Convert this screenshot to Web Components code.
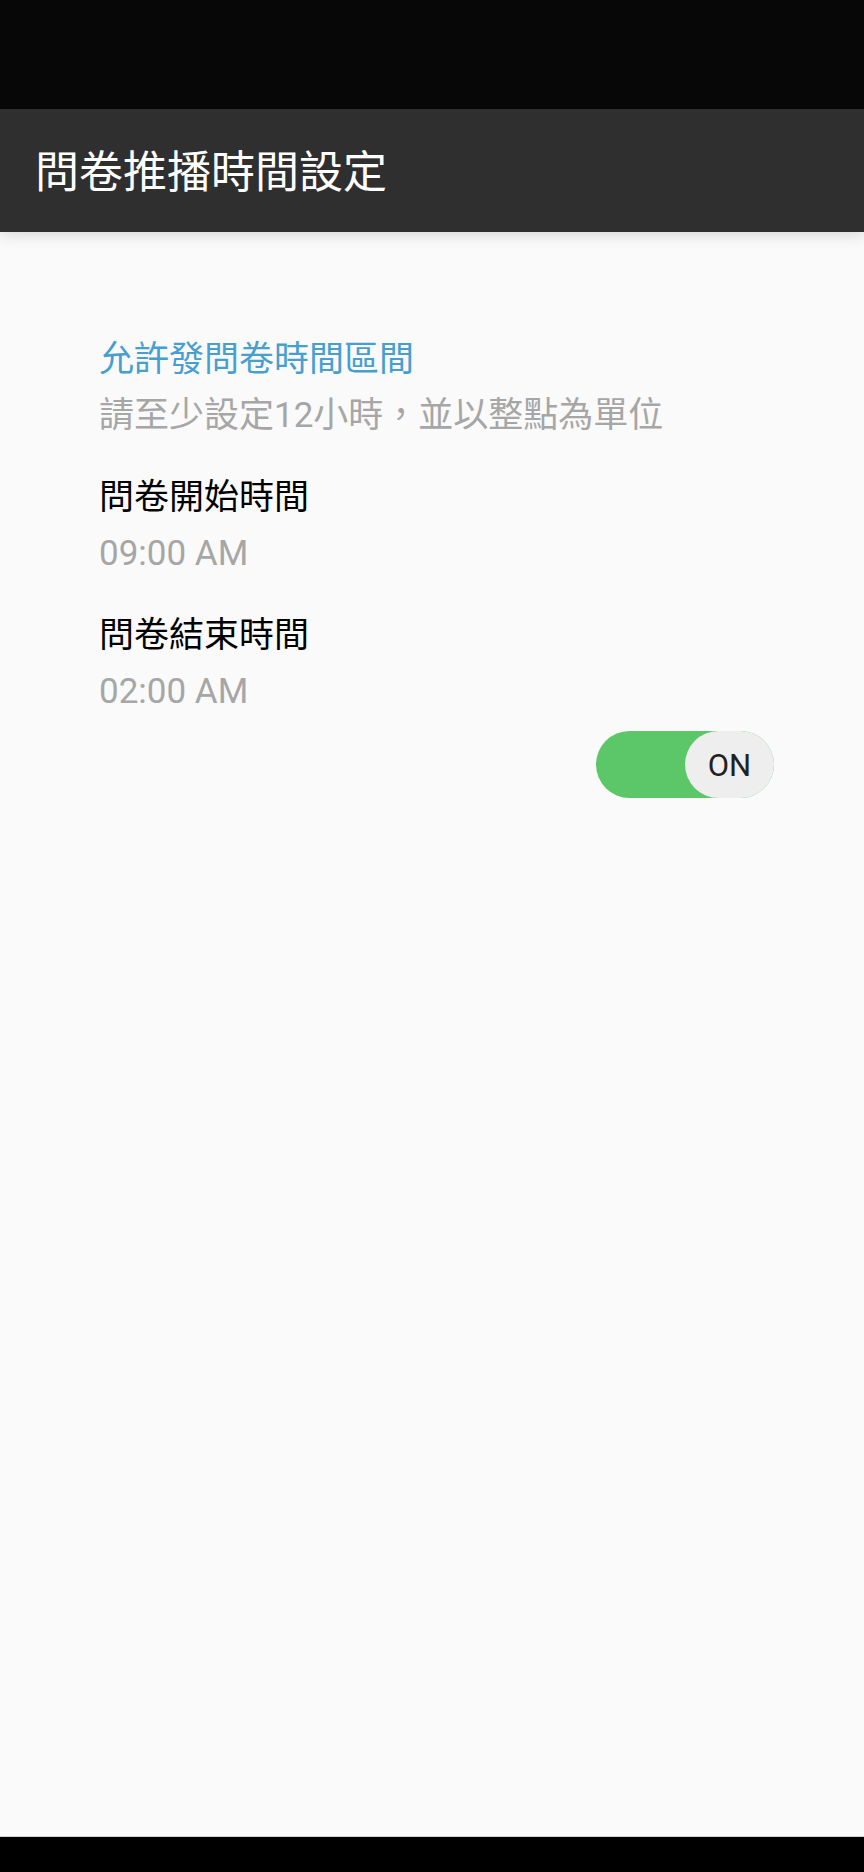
<!DOCTYPE html>
<html lang="zh-Hant">
<head>
<meta charset="utf-8">
<meta name="viewport" content="width=device-width, initial-scale=1">
<title>問卷推播時間設定</title>
<style>
html, body { margin: 0; }
body { background: #fafafa; font-family: Roboto, "Noto Sans CJK TC", sans-serif; }
</style>
</head>
<body>
<survey-screen>
  <app-bar slot="bar">問卷推播時間設定</app-bar>
  <setting-note><span slot="title">允許發問卷時間區間</span>請至少設定12小時，並以整點為單位</setting-note>
  <time-setting><span slot="title">問卷開始時間</span>09:00 AM</time-setting>
  <time-setting><span slot="title">問卷結束時間</span>02:00 AM</time-setting>
  <toggle-switch slot="action">ON</toggle-switch>
</survey-screen>
<script>
const define = (name, html) => customElements.define(name, class extends HTMLElement {
  constructor() {
    super();
    this.attachShadow({ mode: 'open' }).innerHTML = html;
  }
});

define('survey-screen', `
  <style>
    :host { display: flex; flex-direction: column; min-height: 100vh; }
    .status { height: 109px; background: #070707; }
    main { flex: 1; padding: 100px 90px 24px 99px; border-bottom: 1px solid #d0d0d0; }
    .list { display: flex; flex-direction: column; gap: 26px; }
    .action { display: flex; justify-content: flex-end; margin-top: 11px; }
    .nav { height: 35px; background: #000; }
  </style>
  <div class="status"></div>
  <slot name="bar"></slot>
  <main>
    <div class="list"><slot></slot></div>
    <div class="action"><slot name="action"></slot></div>
  </main>
  <div class="nav"></div>`);

define('app-bar', `
  <style>
    :host { display: block; background: #2f2f2f; color: #fff; box-shadow: 0 3px 14px rgba(0, 0, 0, .14); clip-path: inset(0 0 -20px 0); }
    header { display: flex; align-items: center; box-sizing: border-box; height: 123px; padding: 5px 35px 0; }
    h1 { margin: 0; font-size: 44px; line-height: 56px; font-weight: 400; }
  </style>
  <header><h1><slot></slot></h1></header>`);

define('setting-note', `
  <style>
    :host { display: block; font-size: 35px; line-height: 56px; }
    h2, p { margin: 0; font: inherit; }
    h2 { color: #479fd0; }
    p { color: #a6a6a6; }
  </style>
  <h2><slot name="title"></slot></h2>
  <p><slot></slot></p>`);

define('time-setting', `
  <style>
    :host { display: block; font-size: 35px; line-height: 56px; }
    button { display: block; width: 100%; padding: 0; border: 0; background: none; font: inherit; text-align: left; color: #000; cursor: pointer; }
    span { display: block; }
    .value { color: #a6a6a6; }
  </style>
  <button type="button"><span><slot name="title"></slot></span><span class="value"><slot></slot></span></button>`);

define('toggle-switch', `
  <style>
    :host { display: block; }
    label { display: flex; justify-content: flex-end; position: relative; width: 178px; height: 67px; border-radius: 34px; background: #5cc768; cursor: pointer; }
    input { position: absolute; inset: 0; width: 100%; height: 100%; margin: 0; opacity: 0; cursor: pointer; }
    span { display: grid; place-items: center; box-sizing: border-box; width: 50%; padding-top: 2px; border-radius: 34px; background: #eee; color: #212121; font-size: 31px; line-height: 36px; }
    label:has(input:not(:checked)) { justify-content: flex-start; background: #bdbdbd; }
  </style>
  <label><input type="checkbox" role="switch" checked><span><slot></slot></span></label>`);
</script>
</body>
</html>
